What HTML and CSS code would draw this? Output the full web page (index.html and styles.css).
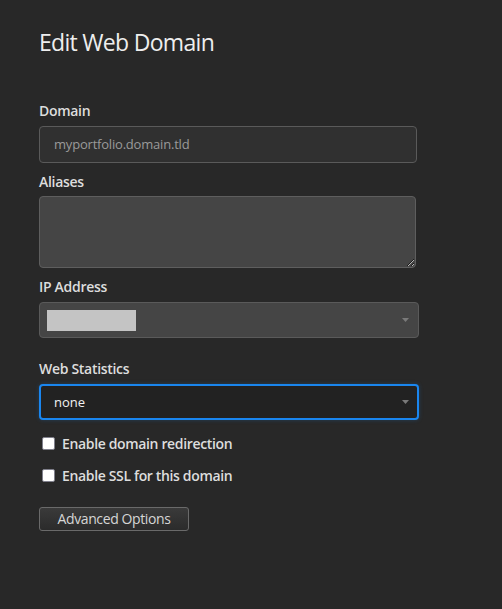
FILE: index.html
```html
<!DOCTYPE html>
<html>
<head>
<meta charset="utf-8">
<link rel="stylesheet" href="styles.css">
</head>
<body>
<div class="page">
  <h1 class="title">Edit Web Domain</h1>
  <form class="form">
    <label class="label label-first">Domain</label>
    <div class="input">myportfolio.domain.tld</div>

    <label class="label">Aliases</label>
    <textarea class="textarea"></textarea>

    <label class="label">IP Address</label>
    <div class="select select-ip">
      <span class="ip-mask"></span>
      <svg class="arrow" width="7" height="4" viewBox="0 0 7 4"><path d="M0 0H7L3.5 4Z" fill="#7a7a7a"/></svg>
    </div>

    <label class="label label-gap">Web Statistics</label>
    <div class="select select-focus">
      <span class="select-text">none</span>
      <svg class="arrow" width="7" height="4" viewBox="0 0 7 4"><path d="M0 0H7L3.5 4Z" fill="#7a7a7a"/></svg>
    </div>

    <div class="checks">
      <div class="check"><span class="box"></span><span class="check-text">Enable domain redirection</span></div>
      <div class="check"><span class="box"></span><span class="check-text">Enable SSL for this domain</span></div>
    </div>

    <button type="button" class="button">Advanced Options</button>
  </form>
</div>
</body>
</html>
```
FILE: styles.css
```css
html, body {
  margin: 0;
  padding: 0;
  background: #282828;
  height: 100%;
}
body {
  font-family: "Open Sans", "Noto Sans", sans-serif;
  color: #dddddd;
}
.page {
  padding: 27px 0 0 39px;
}
.title {
  margin: 0;
  font-size: 23px;
  line-height: 30px;
  font-weight: 400;
  letter-spacing: -0.7px;
  color: #eeeeee;
}
.form {
  display: flex;
  flex-direction: column;
  align-items: flex-start;
}
.label {
  display: block;
  font-size: 14px;
  line-height: 20px;
  font-weight: 600;
  letter-spacing: -0.3px;
  color: #dddddd;
  margin: 9px 0 5px 0;
}
.label-first {
  margin-top: 44px;
}
.label-gap {
  margin-top: 21px;
}
.input {
  box-sizing: border-box;
  width: 378px;
  height: 37px;
  border: 1px solid #5a5a5a;
  border-radius: 4px;
  background: #303030;
  color: #9a9a9a;
  font-size: 13px;
  letter-spacing: -0.2px;
  line-height: 35px;
  padding: 0 14px;
}
.textarea {
  box-sizing: border-box;
  display: block;
  width: 377px;
  height: 72px;
  border: 1px solid #5e5e5e;
  border-radius: 4px;
  background: #454545;
  resize: vertical;
  margin: -1px 0 0 0;
  padding: 0;
  color-scheme: dark;
}
.select {
  box-sizing: border-box;
  width: 380px;
  height: 36px;
  border: 1px solid #5a5a5a;
  border-radius: 4px;
  background: #454545;
  display: flex;
  align-items: center;
  justify-content: space-between;
  padding: 0 9px 0 7px;
}
.ip-mask {
  width: 89px;
  height: 21px;
  background: #c4c4c4;
}
.select-focus {
  background: #222222;
  border: 2px solid #1a86ef;
  box-shadow: 0 0 4px rgba(26, 134, 239, 0.25);
  padding: 0 8px 0 13px;
}
.select-text {
  color: #f2f2f2;
  font-size: 13px;
}
.checks {
  display: flex;
  flex-direction: column;
  gap: 12px;
  margin-top: 13px;
}
.check {
  display: flex;
  align-items: center;
  height: 20px;
}
.box {
  box-sizing: border-box;
  width: 13px;
  height: 13px;
  margin-left: 3px;
  margin-right: 7px;
  background: #ffffff;
  border: 1.5px solid #80808c;
  border-radius: 2px;
}
.check-text {
  font-size: 14px;
  font-weight: 600;
  letter-spacing: -0.35px;
  color: #dddddd;
}
.button {
  box-sizing: border-box;
  margin-top: 22px;
  width: 150px;
  height: 24px;
  border: 1px solid #6a6a6a;
  border-radius: 3px;
  background: linear-gradient(#3a3a3a, #2b2b2b);
  color: #d6d6d6;
  font-family: "Open Sans", "Noto Sans", sans-serif;
  font-size: 14px;
  letter-spacing: -0.4px;
  padding: 0;
  line-height: 22px;
}
```
